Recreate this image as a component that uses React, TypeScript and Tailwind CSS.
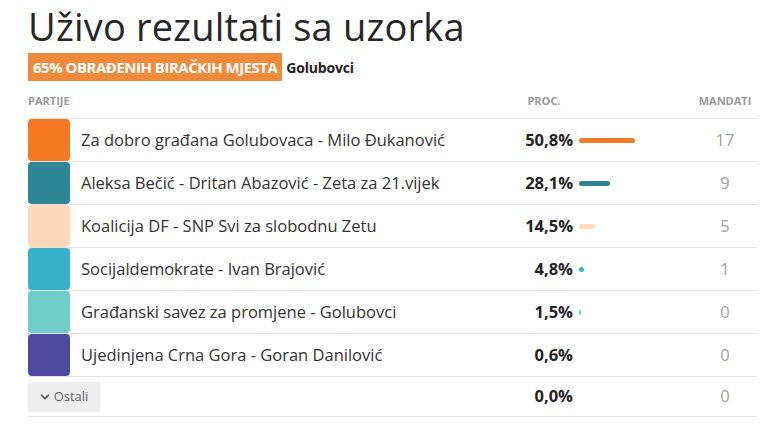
import React from "react";
import { FaChevronDown } from "react-icons/fa";

const rows = [
  { name: "Za dobro građana Golubovaca - Milo Đukanović", pct: 50.8, m: 17, color: "bg-[#f47a22]", bar: "bg-[#f47a22]" },
  { name: "Aleksa Bečić - Dritan Abazović - Zeta za 21.vijek", pct: 28.1, m: 9, color: "bg-[#2e8595]", bar: "bg-[#2e8595]" },
  { name: "Koalicija DF - SNP Svi za slobodnu Zetu", pct: 14.5, m: 5, color: "bg-[#fdd8bc]", bar: "bg-[#fdd8bc]" },
  { name: "Socijaldemokrate - Ivan Brajović", pct: 4.8, m: 1, color: "bg-[#36b1c8]", bar: "bg-[#36b1c8]" },
  { name: "Građanski savez za promjene - Golubovci", pct: 1.5, m: 0, color: "bg-[#6ecdc8]", bar: "bg-[#6ecdc8]" },
  { name: "Ujedinjena Crna Gora - Goran Danilović", pct: 0.6, m: 0, color: "bg-[#4f4a9f]", bar: "bg-[#4f4a9f]" },
];

const fmt = (n: number) => n.toFixed(1).replace(".", ",") + "%";

export default function App() {
  return (
    <div className="w-[770px] h-[428px] bg-white overflow-hidden pl-[28px] pr-[12px] text-[#222]" style={{ fontFamily: "'Open Sans', 'Noto Sans', sans-serif" }}>
      <h1 className="text-[38px] leading-[52px] font-normal tracking-[0.2px] text-[#262626]">Uživo rezultati sa uzorka</h1>
      <div className="flex items-center mt-[1px] h-[28px]">
        <div className="bg-[#ef8a3c] text-white font-bold text-[15px] h-[28px] leading-[28px] px-[5px] uppercase tracking-[-0.5px]">65% obrađenih biračkih mjesta</div>
        <div className="ml-[4px] font-bold text-[14px] text-[#222] tracking-[-0.2px]">Golubovci</div>
      </div>
      <div className="flex items-center h-[38px] text-[11px] font-bold text-[#999] border-b border-[#e2e2e2]">
        <div className="flex-1 pt-[4px]">PARTIJE</div>
        <div className="w-[70px] text-center pt-[4px] mr-[113px]">PROC.</div>
        <div className="w-[66px] text-center pt-[4px]">MANDATI</div>
      </div>
      {rows.map((r) => (
        <div key={r.name} className="flex items-center h-[43px] border-b border-[#e2e2e2]">
          <div className={`w-[42px] h-[42px] rounded-[4px] ${r.color} -mb-px self-start`}></div>
          <div className="flex-1 pl-[11px] text-[16.5px] text-[#333]">{r.name}</div>
          <div className="w-[70px] text-right pr-[6px] text-[16.5px] font-bold text-[#222]">{fmt(r.pct)}</div>
          <div className="w-[113px] flex items-center">
            {r.pct >= 1 && (
              <div className={`h-[5px] rounded-full ${r.bar}`} style={{ width: `${r.pct * 1.1}px` }}></div>
            )}
          </div>
          <div className="w-[66px] text-center text-[16.5px] font-normal text-[#a0a0a0]">{r.m}</div>
        </div>
      ))}
      <div className="flex items-center h-[40px] border-b border-[#e2e2e2]">
        <div className="flex-1">
          <button className="bg-[#eeeeee] w-[72px] h-[30px] flex items-center justify-center gap-[4px] text-[13px] text-[#666]">
            <FaChevronDown className="w-[10px] h-[10px] text-[#555]" />
            Ostali
          </button>
        </div>
        <div className="w-[70px] text-right pr-[6px] text-[16.5px] font-bold text-[#222]">0,0%</div>
        <div className="w-[113px]"></div>
        <div className="w-[66px] text-center text-[16.5px] font-normal text-[#a0a0a0]">0</div>
      </div>
    </div>
  );
}
